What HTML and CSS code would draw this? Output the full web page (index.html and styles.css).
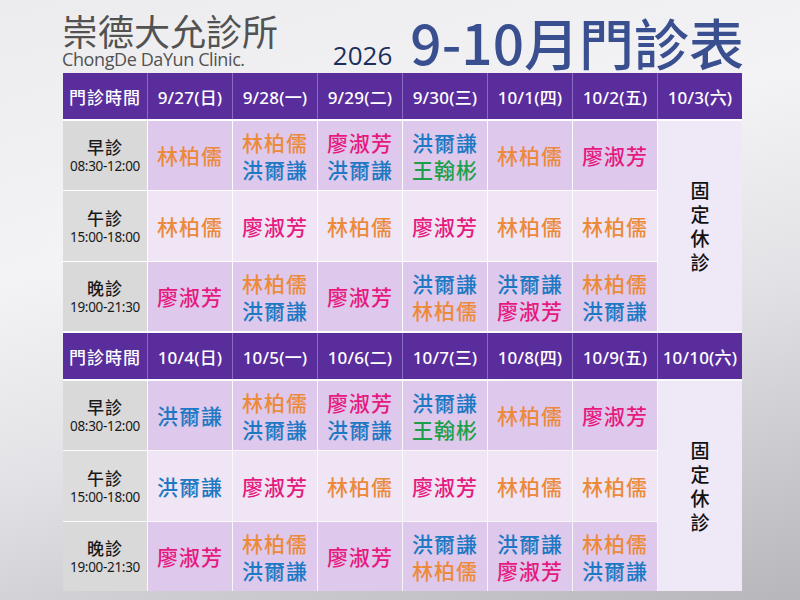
FILE: index.html
```html
<!DOCTYPE html>
<html lang="zh-Hant">
<head>
<meta charset="utf-8">
<title>崇德大允診所 9-10月門診表</title>
<link rel="stylesheet" href="styles.css">
</head>
<body>
<div class="page">
  <header class="top">
    <div class="brand">
      <div class="brand-name">崇德大允診所</div>
      <div class="brand-en">ChongDe DaYun Clinic.</div>
    </div>
    <div class="title">
      <span class="year">2026</span>
      <span class="main">9-10月門診表</span>
    </div>
  </header>

  <main class="sched">
    <section class="block">
      <div class="hrow">
        <div class="hcell">門診時間</div>
        <div class="hcell">9/27(日)</div>
        <div class="hcell">9/28(一)</div>
        <div class="hcell">9/29(二)</div>
        <div class="hcell">9/30(三)</div>
        <div class="hcell">10/1(四)</div>
        <div class="hcell">10/2(五)</div>
        <div class="hcell">10/3(六)</div>
      </div>
      <div class="body">
        <div class="slot r1"><span class="sname">早診</span><span class="stime">08:30-12:00</span></div>
        <div class="cell dark"><span class="o">林柏儒</span></div>
        <div class="cell dark"><span class="o">林柏儒</span><span class="b">洪爾謙</span></div>
        <div class="cell dark"><span class="p">廖淑芳</span><span class="b">洪爾謙</span></div>
        <div class="cell dark"><span class="b">洪爾謙</span><span class="g">王翰彬</span></div>
        <div class="cell dark"><span class="o">林柏儒</span></div>
        <div class="cell dark"><span class="p">廖淑芳</span></div>
        <div class="closed">固<br>定<br>休<br>診</div>

        <div class="slot r2"><span class="sname">午診</span><span class="stime">15:00-18:00</span></div>
        <div class="cell light"><span class="o">林柏儒</span></div>
        <div class="cell light"><span class="p">廖淑芳</span></div>
        <div class="cell light"><span class="o">林柏儒</span></div>
        <div class="cell light"><span class="p">廖淑芳</span></div>
        <div class="cell light"><span class="o">林柏儒</span></div>
        <div class="cell light"><span class="o">林柏儒</span></div>

        <div class="slot r3"><span class="sname">晚診</span><span class="stime">19:00-21:30</span></div>
        <div class="cell dark"><span class="p">廖淑芳</span></div>
        <div class="cell dark"><span class="o">林柏儒</span><span class="b">洪爾謙</span></div>
        <div class="cell dark"><span class="p">廖淑芳</span></div>
        <div class="cell dark"><span class="b">洪爾謙</span><span class="o">林柏儒</span></div>
        <div class="cell dark"><span class="b">洪爾謙</span><span class="p">廖淑芳</span></div>
        <div class="cell dark"><span class="o">林柏儒</span><span class="b">洪爾謙</span></div>
      </div>
    </section>

    <section class="block">
      <div class="hrow">
        <div class="hcell">門診時間</div>
        <div class="hcell">10/4(日)</div>
        <div class="hcell">10/5(一)</div>
        <div class="hcell">10/6(二)</div>
        <div class="hcell">10/7(三)</div>
        <div class="hcell">10/8(四)</div>
        <div class="hcell">10/9(五)</div>
        <div class="hcell">10/10(六)</div>
      </div>
      <div class="body">
        <div class="slot r1"><span class="sname">早診</span><span class="stime">08:30-12:00</span></div>
        <div class="cell dark"><span class="b">洪爾謙</span></div>
        <div class="cell dark"><span class="o">林柏儒</span><span class="b">洪爾謙</span></div>
        <div class="cell dark"><span class="p">廖淑芳</span><span class="b">洪爾謙</span></div>
        <div class="cell dark"><span class="b">洪爾謙</span><span class="g">王翰彬</span></div>
        <div class="cell dark"><span class="o">林柏儒</span></div>
        <div class="cell dark"><span class="p">廖淑芳</span></div>
        <div class="closed">固<br>定<br>休<br>診</div>

        <div class="slot r2"><span class="sname">午診</span><span class="stime">15:00-18:00</span></div>
        <div class="cell light"><span class="b">洪爾謙</span></div>
        <div class="cell light"><span class="p">廖淑芳</span></div>
        <div class="cell light"><span class="o">林柏儒</span></div>
        <div class="cell light"><span class="p">廖淑芳</span></div>
        <div class="cell light"><span class="o">林柏儒</span></div>
        <div class="cell light"><span class="o">林柏儒</span></div>

        <div class="slot r3"><span class="sname">晚診</span><span class="stime">19:00-21:30</span></div>
        <div class="cell dark"><span class="p">廖淑芳</span></div>
        <div class="cell dark"><span class="o">林柏儒</span><span class="b">洪爾謙</span></div>
        <div class="cell dark"><span class="p">廖淑芳</span></div>
        <div class="cell dark"><span class="b">洪爾謙</span><span class="o">林柏儒</span></div>
        <div class="cell dark"><span class="b">洪爾謙</span><span class="p">廖淑芳</span></div>
        <div class="cell dark"><span class="o">林柏儒</span><span class="b">洪爾謙</span></div>
      </div>
    </section>
  </main>
</div>
</body>
</html>
```

FILE: styles.css
```css
html, body {
  margin: 0;
  padding: 0;
}

body {
  width: 800px;
  height: 600px;
  overflow: hidden;
  font-family: "Noto Sans", "Noto Sans CJK TC", sans-serif;
  background:
    radial-gradient(ellipse 420px 260px at 330px 250px, rgba(255,255,255,0.9), rgba(255,255,255,0) 70%),
    linear-gradient(165deg, #ececee 0%, #f3f3f5 35%, #e2e2e6 60%, #c9c9ce 82%, #b6b6bb 100%);
}

.page {
  width: 800px;
  height: 600px;
  display: flex;
  flex-direction: column;
}

.top {
  height: 73px;
  display: flex;
  justify-content: space-between;
  align-items: flex-start;
  padding: 0 56px 0 62px;
}

.brand {
  padding-top: 11px;
  color: #525252;
}

.brand-name {
  font-family: "Noto Sans CJK TC", sans-serif;
  font-size: 36px;
  line-height: 38px;
  font-weight: 400;
}

.brand-en {
  font-family: "Open Sans", "Noto Sans", sans-serif;
  font-size: 18px;
  line-height: 20px;
  letter-spacing: -0.4px;
  margin-top: 0;
}

.title {
  display: flex;
  align-items: baseline;
  gap: 18px;
  padding-top: 13px;
}

.year {
  font-family: "Open Sans", "Noto Sans", sans-serif;
  font-size: 26px;
  color: #1c2f5c;
  font-weight: 500;
}

.main {
  font-family: "Noto Sans CJK TC", sans-serif;
  font-size: 55px;
  line-height: 56px;
  color: #3a4f8f;
  font-weight: 500;
}

.sched {
  margin-left: 63px;
  width: 679px;
  display: flex;
  flex-direction: column;
  gap: 2px;
  background: rgba(255,255,255,0.85);
}

.block {
  display: flex;
  flex-direction: column;
  gap: 2px;
}

.hrow {
  display: grid;
  grid-template-columns: repeat(8, 84px);
  column-gap: 1px;
  background: #8a6bbf;
  height: 46px;
}

.hcell {
  background: #5a2d9d;
  color: #ffffff;
  font-family: "Noto Sans", "Noto Sans CJK TC", sans-serif;
  font-size: 17px;
  font-weight: 500;
  display: flex;
  align-items: center;
  justify-content: center;
  letter-spacing: 0.2px;
}

.hcell:first-child {
  font-family: "Noto Sans CJK TC", sans-serif;
  letter-spacing: 1px;
}

.body {
  display: grid;
  grid-template-columns: repeat(8, 84px);
  grid-template-rows: 69px 70px 69px;
  gap: 1px;
}

.slot {
  background: #d9d9d9;
  display: flex;
  flex-direction: column;
  align-items: center;
  justify-content: center;
  color: #1a1a1a;
}

.slot.r2 {
  background: #dcdcdc;
}

.sname {
  font-family: "Noto Sans CJK TC", sans-serif;
  font-size: 17px;
  line-height: 21px;
  font-weight: 500;
  letter-spacing: 1px;
}

.stime {
  font-family: "Noto Sans", sans-serif;
  font-size: 13.5px;
  line-height: 18px;
  letter-spacing: -0.3px;
}

.cell {
  display: flex;
  flex-direction: column;
  align-items: center;
  justify-content: center;
  font-family: "Noto Sans CJK TC", sans-serif;
  font-size: 21px;
  line-height: 27px;
  font-weight: 500;
  letter-spacing: 1px;
}

.cell.dark {
  background: #dec8ec;
}

.cell.light {
  background: #efe5f5;
}

.closed {
  grid-column: 8;
  grid-row: 1 / 4;
  background: #efe8f7;
  display: flex;
  align-items: center;
  justify-content: center;
  text-align: center;
  font-family: "Noto Sans CJK TC", sans-serif;
  font-size: 19px;
  line-height: 24px;
  color: #111111;
  font-weight: 500;
}

.o { color: #ec8a3b; }
.b { color: #1d79c3; }
.p { color: #e6197e; }
.g { color: #1d9f4a; }
```
